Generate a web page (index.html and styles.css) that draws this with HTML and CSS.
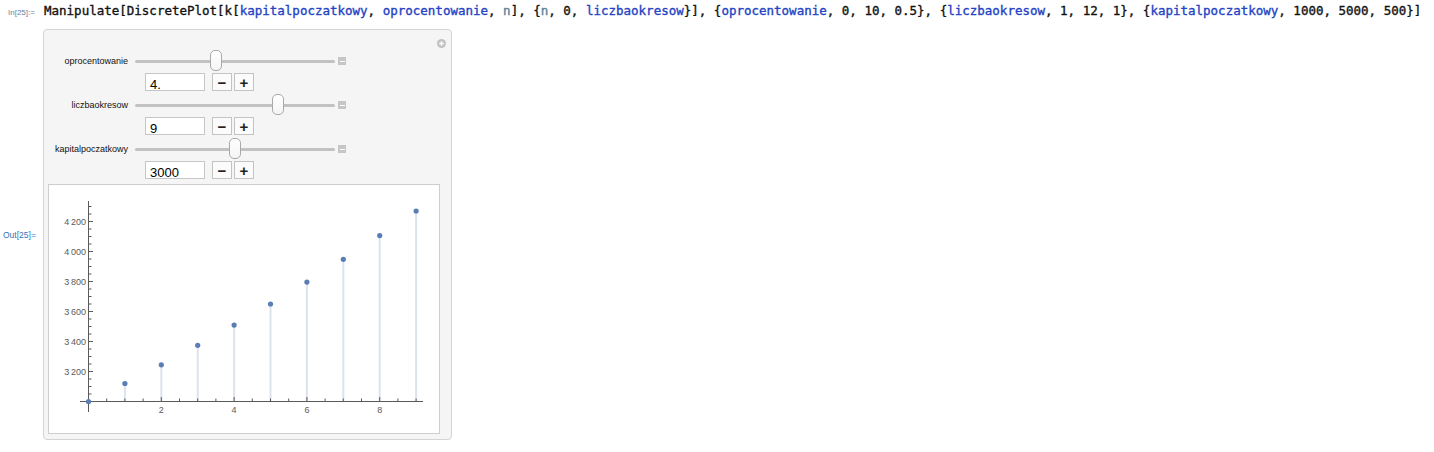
FILE: index.html
```html
<!DOCTYPE html>
<html>
<head>
<meta charset="utf-8">
<link rel="stylesheet" href="styles.css">
</head>
<body>
<div class="cell-in">
  <span class="lbl-in">In[25]:=</span>
  <code class="code"><span class="k">Manipulate[DiscretePlot[k[</span><span class="v">kapitalpoczatkowy</span>, <span class="v">oprocentowanie</span>, <span class="n">n</span>], {<span class="n">n</span>, 0, <span class="v">liczbaokresow</span>}], {<span class="v">oprocentowanie</span>, 0, 10, 0.5}, {<span class="v">liczbaokresow</span>, 1, 12, 1}, {<span class="v">kapitalpoczatkowy</span>, 1000, 5000, 500}]</code>
</div>
<div class="cell-out">
  <span class="lbl-out">Out[25]=</span>
  <div class="panel">
    <span class="plus-icon"><svg width="9" height="9" viewBox="0 0 9 9"><circle cx="4.5" cy="4.5" r="4.5" fill="#c2c2c2"/><path d="M2.2 4.5h4.6M4.5 2.2v4.6" stroke="#fff" stroke-width="1.4"/></svg></span>
    <div class="controls">
      <div class="ctrl">
        <div class="ctrl-top">
          <span class="ctrl-label">oprocentowanie</span>
          <div class="slider"><div class="track"></div><div class="thumb" style="left:75px"></div></div>
          <span class="collapse"></span>
        </div>
        <div class="ctrl-bottom">
          <span class="field">4.</span>
          <span class="btn">&minus;</span><span class="btn">+</span>
        </div>
      </div>
      <div class="ctrl">
        <div class="ctrl-top">
          <span class="ctrl-label">liczbaokresow</span>
          <div class="slider"><div class="track"></div><div class="thumb" style="left:137px"></div></div>
          <span class="collapse"></span>
        </div>
        <div class="ctrl-bottom">
          <span class="field">9</span>
          <span class="btn">&minus;</span><span class="btn">+</span>
        </div>
      </div>
      <div class="ctrl">
        <div class="ctrl-top">
          <span class="ctrl-label">kapitalpoczatkowy</span>
          <div class="slider"><div class="track"></div><div class="thumb" style="left:94px"></div></div>
          <span class="collapse"></span>
        </div>
        <div class="ctrl-bottom">
          <span class="field">3000</span>
          <span class="btn">&minus;</span><span class="btn">+</span>
        </div>
      </div>
    </div>
    <div class="plot">
      <svg class="chart" width="390" height="248" viewBox="0 0 390 248">
        <g class="stems">
          <line x1="75.9" y1="198.5" x2="75.9" y2="216"/>
          <line x1="112.3" y1="179.8" x2="112.3" y2="216"/>
          <line x1="148.7" y1="160.3" x2="148.7" y2="216"/>
          <line x1="185.1" y1="140.1" x2="185.1" y2="216"/>
          <line x1="221.5" y1="119" x2="221.5" y2="216"/>
          <line x1="257.9" y1="97.1" x2="257.9" y2="216"/>
          <line x1="294.3" y1="74.3" x2="294.3" y2="216"/>
          <line x1="330.7" y1="50.6" x2="330.7" y2="216"/>
          <line x1="367.1" y1="26" x2="367.1" y2="216"/>
        </g>
        <g class="axes">
          <path d="M31 216.5H374M39.5 16V227"/>
          <path class="ticks" d="M57.7 216v-2.5M75.9 216v-2.5M94.1 216v-2.5M112.3 216v-4M130.5 216v-2.5M148.7 216v-2.5M166.9 216v-2.5M185.1 216v-4M203.3 216v-2.5M221.5 216v-2.5M239.7 216v-2.5M257.9 216v-4M276.1 216v-2.5M294.3 216v-2.5M312.5 216v-2.5M330.7 216v-4M348.9 216v-2.5M367.1 216v-2.5"/>
          <path class="ticks" d="M40 186.5h4M40 156.5h4M40 126.5h4M40 96.5h4M40 66.5h4M40 36.5h4M40 209h2.5M40 201.5h2.5M40 194h2.5M40 179h2.5M40 171.5h2.5M40 164h2.5M40 149h2.5M40 141.5h2.5M40 134h2.5M40 119h2.5M40 111.5h2.5M40 104h2.5M40 89h2.5M40 81.5h2.5M40 74h2.5M40 59h2.5M40 51.5h2.5M40 44h2.5M40 29h2.5M40 21.5h2.5"/>
        </g>
        <g class="xlabels">
          <text x="112.3" y="227.5">2</text>
          <text x="185.1" y="227.5">4</text>
          <text x="257.9" y="227.5">6</text>
          <text x="330.7" y="227.5">8</text>
        </g>
        <g class="ylabels">
          <text x="37" y="189.5">3&#8201;200</text>
          <text x="37" y="159.5">3&#8201;400</text>
          <text x="37" y="129.5">3&#8201;600</text>
          <text x="37" y="99.5">3&#8201;800</text>
          <text x="37" y="69.5">4&#8201;000</text>
          <text x="37" y="39.5">4&#8201;200</text>
        </g>
        <g class="points">
          <circle cx="39.5" cy="216.5" r="2.6"/>
          <circle cx="75.9" cy="198.5" r="2.6"/>
          <circle cx="112.3" cy="179.8" r="2.6"/>
          <circle cx="148.7" cy="160.3" r="2.6"/>
          <circle cx="185.1" cy="140.1" r="2.6"/>
          <circle cx="221.5" cy="119" r="2.6"/>
          <circle cx="257.9" cy="97.1" r="2.6"/>
          <circle cx="294.3" cy="74.3" r="2.6"/>
          <circle cx="330.7" cy="50.6" r="2.6"/>
          <circle cx="367.1" cy="26" r="2.6"/>
        </g>
      </svg>
    </div>
  </div>
</div>
</body>
</html>
```
FILE: styles.css
```css
html, body {
  margin: 0;
  padding: 0;
  background: #ffffff;
}

body {
  width: 1434px;
  height: 452px;
  overflow: hidden;
  font-family: "Liberation Sans", Arial, sans-serif;
}

.cell-in {
  height: 29px;
  box-sizing: border-box;
  padding-top: 3px;
  display: flex;
  align-items: baseline;
}

.lbl-in {
  width: 36px;
  padding-left: 8px;
  font-size: 8px;
  color: #6a7fa2;
  font-family: "Liberation Sans", Arial, sans-serif;
}

.code {
  font-family: "DejaVu Sans Mono", "Liberation Mono", monospace;
  font-size: 12.5px;
  line-height: 16px;
  color: #111111;
  white-space: pre;
  -webkit-text-stroke: 0.35px currentColor;
}

.code .v {
  color: #2343c4;
}

.code .n {
  color: #5a8496;
}

.cell-out {
  display: flex;
  align-items: center;
}

.lbl-out {
  width: 40px;
  padding-left: 3px;
  font-size: 8.5px;
  color: #2f74c0;
}

.panel {
  position: relative;
  width: 409px;
  height: 411px;
  box-sizing: border-box;
  border: 1px solid #d4d4d4;
  border-radius: 4px;
  background: #f5f5f5;
  padding: 20px 11px 5px 4px;
  display: flex;
  flex-direction: column;
}

.plus-icon {
  position: absolute;
  top: 9px;
  right: 5px;
  width: 9px;
  height: 9px;
  display: block;
}

.plus-icon svg {
  display: block;
}

.controls {
  display: flex;
  flex-direction: column;
  gap: 3px;
}

.ctrl-top {
  display: flex;
  align-items: center;
  height: 22px;
}

.ctrl-label {
  width: 80px;
  text-align: right;
  font-size: 9px;
  color: #111111;
  white-space: nowrap;
}

.slider {
  position: relative;
  width: 200px;
  height: 22px;
  margin-left: 7px;
  display: flex;
  align-items: center;
}

.track {
  width: 200px;
  height: 3px;
  border-radius: 2px;
  background: #c2c2c2;
}

.thumb {
  position: absolute;
  top: 0;
  width: 12px;
  height: 21px;
  box-sizing: border-box;
  border: 1px solid #a9a9a9;
  border-radius: 5px;
  background: linear-gradient(#ffffff, #f4f4f4);
}

.collapse {
  position: relative;
  width: 8px;
  height: 8px;
  margin-left: 3px;
  background: #c6c6c6;
  display: flex;
  align-items: center;
  justify-content: center;
}

.collapse::after {
  content: "";
  width: 5px;
  height: 1px;
  background: #ffffff;
}

.ctrl-bottom {
  display: flex;
  margin-top: 1px;
  height: 18px;
  padding-left: 97px;
}

.field {
  width: 60px;
  height: 18px;
  box-sizing: border-box;
  border: 1px solid #c6c6c6;
  background: #ffffff;
  font-size: 13px;
  line-height: 13px;
  padding: 4px 0 0 4px;
  color: #000000;
  margin-right: 7px;
}

.btn {
  width: 20px;
  height: 18px;
  box-sizing: border-box;
  border: 1px solid #c3c3c3;
  background: #fbfbfb;
  margin-right: 2px;
  display: flex;
  align-items: center;
  justify-content: center;
  font-size: 15px;
  font-weight: bold;
  color: #222222;
  line-height: 1;
}

.plot {
  margin-top: 5px;
  width: 392px;
  height: 250px;
  flex: none;
  box-sizing: border-box;
  border: 1px solid #cdcdcd;
  background: #ffffff;
}

.chart {
  display: block;
}

.stems line {
  stroke: #dde2ef;
  stroke-width: 2;
}

.axes path {
  stroke: #5a5a5a;
  stroke-width: 1;
  fill: none;
}

.xlabels text,
.ylabels text {
  font-family: "Liberation Sans", Arial, sans-serif;
  font-size: 9px;
  fill: #5a5a5a;
}

.xlabels text {
  text-anchor: middle;
}

.ylabels text {
  text-anchor: end;
}

.points circle {
  fill: #5a7db5;
}
```
